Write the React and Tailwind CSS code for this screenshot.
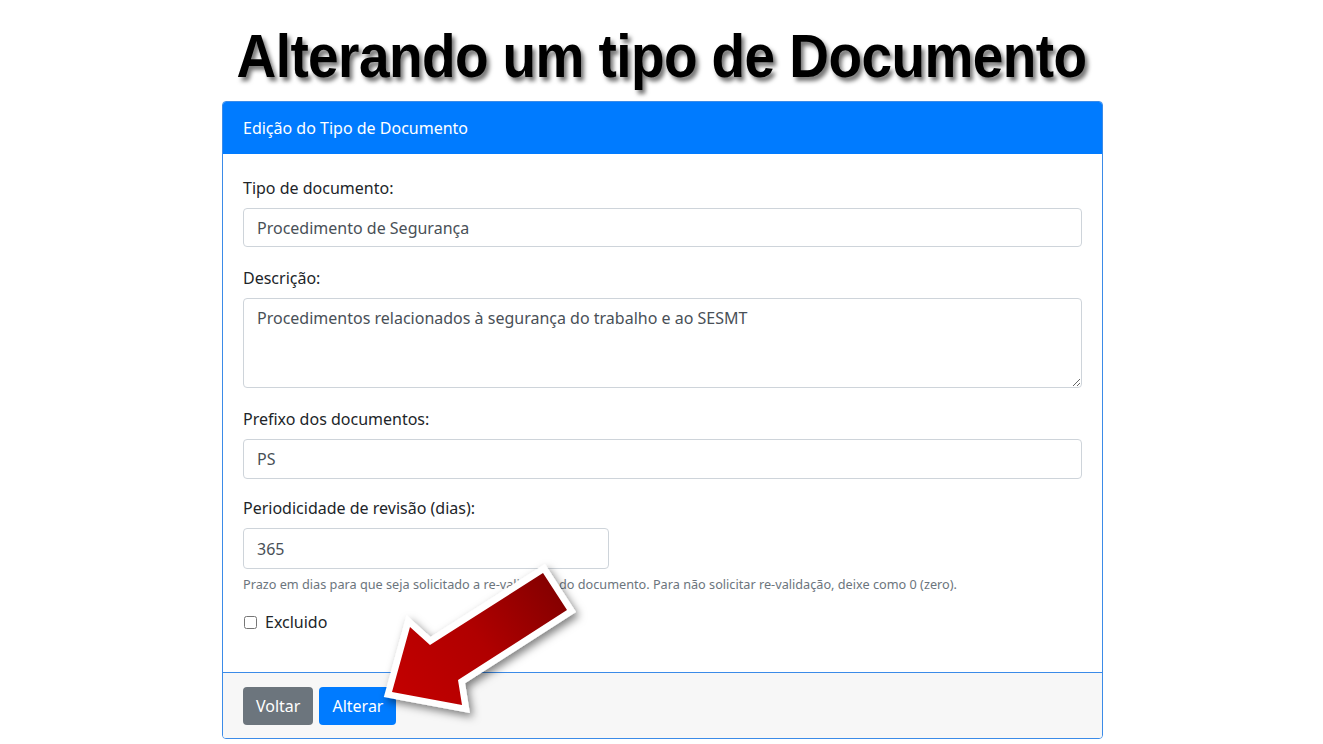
import React from 'react'

const FONT = { fontFamily: '"Noto Sans", "Open Sans", sans-serif' }

function Field({ label, children }) {
  return (
    <div className="mb-[19px]">
      <label className="block mb-[8px] text-[16px] leading-[24px] text-[#212529]">{label}</label>
      {children}
    </div>
  )
}

function Arrow() {
  return (
    <svg className="absolute left-0 top-0 pointer-events-none" width="1323" height="744">
      <defs>
        <linearGradient id="redg" x1="390" y1="700" x2="565" y2="575" gradientUnits="userSpaceOnUse">
          <stop offset="0" stopColor="#c40000" />
          <stop offset="0.5" stopColor="#b00000" />
          <stop offset="1" stopColor="#7e0000" />
        </linearGradient>
        <filter id="shadow" x="-20%" y="-20%" width="140%" height="140%">
          <feDropShadow dx="3" dy="4" stdDeviation="4" floodColor="#000" floodOpacity="0.5" />
        </filter>
      </defs>
      <polygon
        points="392,692 410,627 430,645 543,573 567,610 458,680 462,705"
        fill="url(#redg)"
        stroke="#ffffff"
        strokeWidth="13"
        strokeLinejoin="miter"
        paintOrder="stroke"
        filter="url(#shadow)"
      />
    </svg>
  )
}

export default function App() {
  return (
    <div className="relative w-[1323px] h-[744px] bg-white overflow-hidden" style={FONT}>
      {/* Title */}
      <div className="h-[101px] flex items-center justify-center pt-[12px]">
        <h1
          className="text-[55px] font-bold text-black leading-none tracking-[-0.6px] scale-y-110"
          style={{ fontFamily: '"Liberation Sans", Arial, sans-serif', textShadow: '3px 4px 4px rgba(0,0,0,0.55)' }}
        >
          Alterando um tipo de Documento
        </h1>
      </div>

      {/* Card */}
      <div className="ml-[222px] w-[881px] h-[638px] border border-[#3b8be8] rounded-[4px] flex flex-col overflow-hidden">
        <div className="h-[52px] bg-[#007bff] text-white px-[20px] flex items-center text-[16px]">
          Edição do Tipo de Documento
        </div>

        <div className="flex-1 px-[20px] pt-[22px]">
          <Field label="Tipo de documento:">
            <input
              readOnly
              value="Procedimento de Segurança"
              className="w-full h-[39px] border border-[#ced4da] rounded-[4px] px-[13px] text-[16px] text-[#495057] outline-none"
            />
          </Field>
          <Field label="Descrição:">
            <textarea
              readOnly
              value="Procedimentos relacionados à segurança do trabalho e ao SESMT"
              className="block w-full h-[90px] border border-[#ced4da] rounded-[4px] px-[13px] py-[7px] text-[16px] leading-[24px] text-[#495057] outline-none"
            />
          </Field>
          <div className="mb-[17px]">
            <label className="block mb-[8px] text-[16px] leading-[24px] text-[#212529]">Prefixo dos documentos:</label>
            <input
              readOnly
              value="PS"
              className="w-full h-[40px] border border-[#ced4da] rounded-[4px] px-[13px] text-[16px] text-[#495057] outline-none"
            />
          </div>
          <div>
            <label className="block mb-[8px] text-[16px] leading-[24px] text-[#212529]">Periodicidade de revisão (dias):</label>
            <input
              readOnly
              value="365"
              className="w-[366px] h-[41px] border border-[#ced4da] rounded-[4px] px-[13px] text-[16px] text-[#495057] outline-none"
            />
            <p className="mt-[6px] text-[12.7px] leading-[18px] text-[#6c757d]">
              Prazo em dias para que seja solicitado a re-validação do documento. Para não solicitar re-validação, deixe como 0 (zero).
            </p>
          </div>
          <div className="flex items-center gap-[8px] mt-[17px] h-[24px]">
            <input type="checkbox" className="w-[13px] h-[13px] ml-[1px]" />
            <span className="text-[16px] text-[#212529]">Excluido</span>
          </div>
        </div>

        <div className="h-[66px] bg-[#f7f7f7] border-t border-[#3b8be8] px-[20px] flex items-center gap-[6px]">
          <button className="h-[38px] px-[13px] rounded-[4px] bg-[#6c757d] text-white text-[16px]">Voltar</button>
          <button className="h-[38px] px-[13px] rounded-[4px] bg-[#007bff] text-white text-[16px]">Alterar</button>
        </div>
      </div>

      <Arrow />
    </div>
  )
}
